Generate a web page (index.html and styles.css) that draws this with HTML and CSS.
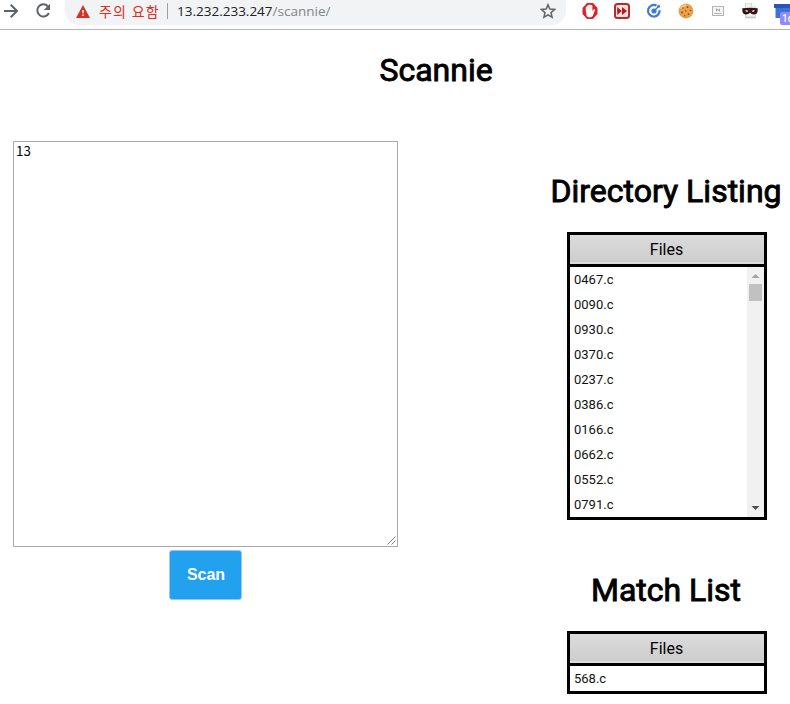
FILE: index.html
```html
<!DOCTYPE html>
<html lang="ko">
<head>
<meta charset="utf-8">
<title>Scannie</title>
<link rel="stylesheet" href="styles.css">
</head>
<body>
<header class="toolbar">
  <svg class="nav" width="18" height="20" viewBox="0 0 18 20"><path d="M4 11H16.5M10.7 4.7L17 11L10.7 17.3" fill="none" stroke="#5f6368" stroke-width="2"/></svg>
  <svg class="nav reload" width="16" height="20" viewBox="0 0 16 20"><path d="M13 6.4A6.1 6.1 0 1 0 13.9 13" fill="none" stroke="#5f6368" stroke-width="2"/><path d="M15 3.8V10H8.8Z" fill="#5f6368"/></svg>
  <div class="omnibox">
    <svg class="warning" width="14" height="13" viewBox="0 0 14 13"><path d="M7 0L14 13H0Z" fill="#d93025"/><path d="M6.3 5h1.5v3.2H6.3zM6.3 9.4h1.5v1.5H6.3z" fill="#fff"/></svg>
    <span class="insecure">주의 요함</span>
    <span class="divider"></span>
    <span class="url">13.232.233.247<span class="path">/scannie/</span></span>
    <svg class="star" width="16" height="16" viewBox="0 0 16 16"><path d="M8 1.7L9.8 6.1L14.6 6.5L11 9.6L12.1 14.2L8 11.8L3.9 14.2L5 9.6L1.4 6.5L6.2 6.1Z" fill="none" stroke="#5f6368" stroke-width="1.5"/></svg>
  </div>
  <div class="extensions">
    <svg width="16" height="16" viewBox="0 0 16 16"><path d="M5 0h6l4.5 5v6L11 16H5L.5 11V5Z" fill="#df2026"/><path d="M3.8 8V4.3c0-1 1.5-1 1.5 0V2.7c0-1 1.7-1 1.7 0V2.2c0-1 1.7-1 1.7 0v.6c0-1 1.7-1 1.7 0V8l1-1.2c.7-.9 2-.5 1.5.6L10.7 13c-.8 1.7-5 1.8-6 0Z" fill="#fff"/><path d="M5.4 4v3M7.1 3v4M8.8 3v4" stroke="#e9b5b7" stroke-width=".5"/></svg>
    <svg width="16" height="16" viewBox="0 0 16 16"><rect x="1" y="1" width="14" height="14" rx="2.5" fill="#fbe3df" stroke="#b92b2b" stroke-width="2"/><path d="M3.2 4l4.6 4-4.6 4zM8 4l5 4-5 4z" fill="#b01820"/></svg>
    <svg width="16" height="16" viewBox="0 0 16 16"><path d="M10.5 2.6A5.8 5.8 0 1 0 13.6 7.2" fill="none" stroke="#3b7bd4" stroke-width="2.2"/><circle cx="8" cy="8" r="2.6" fill="#3b7bd4"/><path d="M8 8l4-4" stroke="#3b7bd4" stroke-width="1.4"/><circle cx="12.6" cy="3.2" r="1.5" fill="#3b7bd4"/></svg>
    <svg width="16" height="16" viewBox="0 0 16 16"><circle cx="8" cy="8" r="7" fill="#e8a348" stroke="#d58a35" stroke-width=".7"/><path d="M2.8 5.5A6 6 0 0 1 8 2.2" stroke="#f6c77e" stroke-width="2" fill="none"/><g fill="#8a4c1e"><circle cx="5" cy="5" r=".8"/><circle cx="9.5" cy="4.2" r=".9"/><circle cx="12.5" cy="7.5" r=".8"/><circle cx="7.8" cy="8" r=".8"/><circle cx="4" cy="9.5" r=".9"/><circle cx="10.5" cy="11.2" r=".9"/><circle cx="6.8" cy="12.7" r=".8"/></g></svg>
    <svg width="16" height="16" viewBox="0 0 16 16"><rect x="2.5" y="3.5" width="11" height="9" fill="#f7f7f7" stroke="#b5b5b5"/><path d="M4 10.5h8" stroke="#b5b5b5"/><path d="M6.5 8.3V5.7l3 2.4V5.7" fill="none" stroke="#999" stroke-width=".9"/></svg>
    <svg width="16" height="16" viewBox="0 0 16 16"><path d="M3.5 0h6l4 4v11h-10z" fill="#f2f2f2" stroke="#ccc" stroke-width=".7"/><path d="M9.5 0v4h4" fill="#fff" stroke="#ccc" stroke-width=".7"/><path d="M.3 5.2Q8 4.5 15.7 5.2Q16 10.7 13.4 11.3Q10 12 8 9.7Q6 12 2.6 11.3Q0 10.7.3 5.2Z" fill="#351317"/><path d="M3 7.8q1.8-1.2 3.4.3q-1.5 1.5-3.4-.3M9.6 8.1q1.6-1.5 3.4-.3q-1.9 1.8-3.4.3" fill="#fff"/><path d="M4 14.2h9" stroke="#bbb"/></svg>
    <span class="counter">
      <svg width="16" height="16" viewBox="0 0 16 16"><path d="M0 1h16v4H0z" fill="#2856b6"/><path d="M1.5 5H16v10H1.5z" fill="#3e70d8"/></svg>
      <span class="badge">1d</span>
    </span>
  </div>
</header>
<main class="page">
  <h1 class="title">Scannie</h1>
  <div class="content">
    <form class="scan">
      <div class="input" role="textbox">13<svg class="grip" width="9" height="9" viewBox="0 0 9 9"><path d="M.5 8.5L8.5.5M4.5 8.5L8.5 4.5" stroke="#777" stroke-width=".9"/></svg></div>
      <button class="button" type="button"><span>Scan</span></button>
    </form>
    <div class="results">
      <h1>Directory Listing</h1>
      <section class="table">
        <div class="head">Files</div>
        <div class="body">
          <ul>
            <li>0467.c</li><li>0090.c</li><li>0930.c</li><li>0370.c</li><li>0237.c</li>
            <li>0386.c</li><li>0166.c</li><li>0662.c</li><li>0552.c</li><li>0791.c</li>
          </ul>
          <div class="scrollbar">
            <svg width="17" height="17" viewBox="0 0 17 17"><path d="M4.5 11L8.5 7L12.5 11Z" fill="#a3a3a3"/></svg>
            <div class="thumb"></div>
            <svg class="down" width="17" height="17" viewBox="0 0 17 17"><path d="M4.5 6L8.5 10L12.5 6Z" fill="#505050"/></svg>
          </div>
        </div>
      </section>
      <h1 class="match">Match List</h1>
      <section class="table">
        <div class="head">Files</div>
        <div class="body"><ul><li>568.c</li></ul></div>
      </section>
    </div>
  </div>
</main>
</body>
</html>
```
FILE: styles.css
```css
* { box-sizing: border-box; }
body {
  margin: 0;
  height: 704px;
  overflow: hidden;
  background: #fff;
  color: #000;
  font-family: Roboto, "Noto Sans CJK KR", sans-serif;
}
svg { display: block; flex: none; }
.toolbar {
  display: flex;
  height: 30px;
  overflow: hidden;
  border-bottom: 1px solid #b5b5b5;
}
.reload { margin-left: 17px; }
.omnibox {
  display: flex;
  align-items: center;
  flex: none;
  width: 501px;
  height: 28px;
  margin: -3px 0 0 14px;
  padding: 0 10px 0 11px;
  border-radius: 0 0 14px 14px;
  background: #f1f3f4;
  font: 14px/20px "Open Sans", "Noto Sans CJK KR", sans-serif;
  white-space: nowrap;
}
.insecure {
  width: 61px;
  margin-left: 9px;
  color: #d93025;
  font-family: "Noto Sans CJK KR", sans-serif;
  font-weight: 400;
  letter-spacing: 1.05px;
}
.divider { width: 1px; height: 16px; margin-left: 7px; background: #9aa0a6; }
.url { margin-left: 9px; color: #202124; font-size: 13.5px; }
.path { color: #80868b; }
.star { margin-left: auto; }
.extensions { display: flex; gap: 16px; margin: 3px 0 0 16px; }
.counter { position: relative; width: 16px; }
.badge {
  position: absolute;
  left: 6px;
  top: 9px;
  width: 18px;
  height: 13px;
  padding-left: 2px;
  border-radius: 2px;
  background: #8f8bfb;
  color: #fff;
  font: 500 10px/13px Roboto, sans-serif;
}
.page { width: 872px; }
h1 {
  margin: 0;
  font-size: 32px;
  line-height: 38px;
  font-weight: 400;
  text-align: center;
  -webkit-text-stroke: 0.9px #000;
}
.title { padding-top: 21px; }
.content { display: flex; margin-top: 52px; }
.scan { display: flex; flex-direction: column; align-items: center; width: 385px; margin-left: 13px; }
.input {
  position: relative;
  width: 385px;
  height: 406px;
  padding: 0 2px;
  border: 1px solid #a9a9a9;
  font: 13.33px/18px "Noto Sans CJK KR", sans-serif;
}
.grip { position: absolute; right: 1px; bottom: 1px; }
.button {
  width: 73px;
  height: 50px;
  margin-top: 3px;
  padding: 0 0 0 1px;
  border: 1px solid #9cc3fa;
  border-radius: 3px;
  background: #21a1ee;
  color: #fff;
  font: 700 16px/20px "Liberation Sans", sans-serif;
}
.results {
  display: flex;
  flex-direction: column;
  align-items: center;
  width: 240px;
  margin-left: 149px;
  padding-top: 31px;
}
.results h1 { padding-right: 2px; }
.table { width: 200px; margin-top: 22px; border: 3px solid #000; }
.match { margin-top: 51px; }
.head {
  height: 32px;
  padding-right: 1px;
  border-bottom: 3px solid #000;
  background: linear-gradient(#dcdcdc, #cdcdcd 27px, #dcdcdc 27px);
  font-size: 16px;
  line-height: 30px;
  text-align: center;
}
.body { display: flex; justify-content: space-between; }
ul { margin: 0; padding: 0 0 0 4px; list-style: none; }
li { height: 25px; color: #111; font-size: 13px; line-height: 26px; }
.scrollbar { display: flex; flex-direction: column; width: 17px; background: #f1f1f1; }
.thumb { width: 13px; height: 17px; margin-left: 2px; background: #c1c1c1; }
.down { margin-top: auto; }
```
